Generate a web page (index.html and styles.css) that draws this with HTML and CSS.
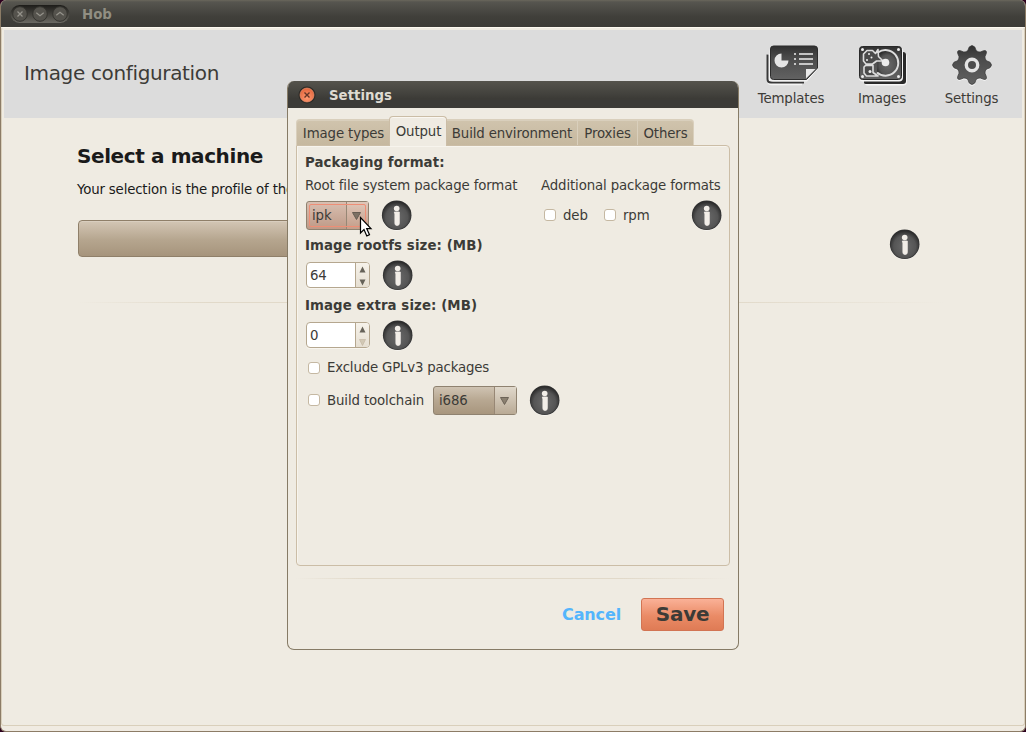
FILE: index.html
```html
<!DOCTYPE html>
<html lang="en">
<head>
<meta charset="utf-8">
<title>Hob</title>
<link rel="stylesheet" href="styles.css">
</head>
<body>
<svg class="defs" width="0" height="0">
  <defs>
    <linearGradient id="dark" x1="0" y1="0" x2="0" y2="1"><stop offset="0" stop-color="#303030"/><stop offset=".35" stop-color="#4b4b4b"/><stop offset="1" stop-color="#626262"/></linearGradient>
    <radialGradient id="disc" cx=".5" cy=".58" r=".55"><stop offset="0" stop-color="#6a6a6a"/><stop offset=".7" stop-color="#555"/><stop offset="1" stop-color="#2c2c2c"/></radialGradient>
    <symbol id="info" viewBox="0 0 32 32">
      <circle cx="15.700" cy="16.900" r="14.800" fill="#fbf9f5"/>
      <circle cx="15.700" cy="16.200" r="14.800" fill="#333"/>
      <circle cx="15.700" cy="16.200" r="14.200" fill="url(#disc)"/>
      <circle cx="15.700" cy="9.500" r="2.800" fill="#f2eee8"/>
      <path d="M13.300 13h5v11.500q0 2-2.200 2t-2.200-2V15z" fill="#f2eee8" stroke="#f2eee8" stroke-width=".8" stroke-linejoin="round"/>
    </symbol>
  </defs>
</svg>
<div class="window">
  <header class="titlebar">
    <svg class="controls" width="60" height="20" viewBox="0 0 60 20">
      <defs><linearGradient id="pill" x1="0" y1="0" x2="0" y2="1"><stop offset="0" stop-color="#1d1c19"/><stop offset="1" stop-color="#6b6962"/></linearGradient></defs>
      <rect x=".5" y="1" width="59" height="18" rx="9" fill="url(#pill)"/>
      <g fill="#55534d" stroke="#35342f"><circle cx="10" cy="10" r="7.3"/><circle cx="30" cy="10" r="7.3"/><circle cx="50" cy="10" r="7.3"/></g>
      <path d="M7.5 7.5l5 5m0-5l-5 5M26.3 8.7l3.7 3 3.7-3M46.3 11.3l3.7-3 3.7 3" fill="none" stroke="#95938b" stroke-width="1.2"/>
    </svg>
    <span class="wtitle">Hob</span>
  </header>
  <main class="content">
    <div class="toolbar">
      <h1 class="heading">Image configuration</h1>
      <nav class="tools">
        <div class="tool tool-templates">
          <svg width="54" height="42" viewBox="0 0 54 42">
            <path d="M3.500 9v26q0 3.500 3.500 3.500h30" fill="none" stroke="#f4f4f4" stroke-width="3.500"/>
            <path d="M2.500 9.500v24.500q0 3.500 3.500 3.500h33" fill="none" stroke="#383838" stroke-width="2"/>
            <path d="M4.500 6q0-4 4-4h41.500q3 0 3 3v19L42 36.500H8q-3.500 0-3.500-3z" fill="#f1f1f1"/>
            <path d="M5.500 4q0-3 3-3h41q3 0 3 3v19L41.500 34.500H8.500q-3 0-3-3z" fill="url(#dark)" stroke="#2d2d2d" stroke-width="1"/>
            <path d="M16.500 8.500v7h7a7 7 0 1 1-7-7z" fill="#e5e5e5"/>
            <path d="M29 9h2M34 9h14M29 14h2M34 14h14M29 19h2M34 19h14" stroke="#eee" stroke-width="1.700"/>
            <path d="M41 24h9.500L41 33.500z" fill="#e9e9e9"/>
          </svg><span class="tlabel">Templates</span>
        </div>
        <div class="tool tool-images">
          <svg width="50" height="42" viewBox="0 0 50 42">
            <path d="M7 37v1.500q0 2 2 2h36q4 0 4-4V12q0-3-3-4z" fill="#f5f5f5"/>
            <path d="M6 35.500v2q0 1.500 2 1.500h37q3 0 3-3V10q0-3-3-3z" fill="#292929"/>
            <rect x="1" y="2" width="44" height="34.500" rx="4" fill="#f5f5f5"/>
            <rect x="1.500" y="1.500" width="42" height="33" rx="3" fill="url(#dark)" stroke="#292929"/>
            <path d="M20 7.500A12.800 12.800 0 1 1 19 27.500" fill="url(#disc)" stroke="#ddd" stroke-width="2"/>
            <path d="M9 5.500h5.500l3 3 2.500-4 .5 7 4.500 4.500h-6.500l-4 3H8L5.500 16V9zM7.500 20.500h7.500v7l5 3.500H8.500L6 28V22z" fill="#4b4b4b" stroke="#ddd" stroke-width="1.600" stroke-linejoin="round"/>
            <circle cx="27.500" cy="17.500" r="3.800" fill="#ededed"/>
            <g fill="#eee"><circle cx="4.500" cy="4.500" r="1.500"/><circle cx="40.500" cy="4.500" r="1.500"/><circle cx="4.500" cy="31.500" r="1.500"/><circle cx="40.500" cy="31.500" r="1.500"/><circle cx="11" cy="9" r="1"/><circle cx="9" cy="15" r="1"/><circle cx="13.500" cy="12.500" r="1"/><circle cx="12" cy="26.500" r="1.500"/></g>
          </svg><span class="tlabel">Images</span>
        </div>
        <div class="tool tool-settings">
          <svg width="42" height="42" viewBox="-21 -20 42 42">
            <defs><path id="gear" d="M-2.800-18Q0-21 2.800-18L4.200-14.500Q6-12.800 8.200-13L11.500-14.300Q15.200-15.200 14.300-11.500L13-8.200Q12.800-6 14.500-4.200L18-2.800Q21 0 18 2.800L14.500 4.200Q12.800 6 13 8.200L14.300 11.500Q15.200 15.200 11.500 14.300L8.200 13Q6 12.800 4.200 14.500L2.800 18Q0 21-2.800 18L-4.200 14.500Q-6 12.800-8.200 13L-11.500 14.300Q-15.200 15.200-14.300 11.500L-13 8.200Q-12.800 6-14.500 4.200L-18 2.800Q-21 0-18-2.800L-14.500-4.200Q-12.800-6-13-8.200L-14.300-11.500Q-15.200-15.200-11.500-14.300L-8.200-13Q-6-12.800-4.200-14.500z"/></defs>
            <use href="#gear" y="1.300" fill="#f8f8f8"/><use href="#gear" fill="url(#dark)" stroke="#383838" stroke-width=".7"/>
            <circle r="5.700" fill="#4d4d4d" stroke="#e4e4e4" stroke-width="3.400"/>
          </svg><span class="tlabel">Settings</span>
        </div>
      </nav>
    </div>
    <section class="machine">
      <h2 class="mtitle">Select a machine</h2>
      <p class="mtext">Your selection is the profile of the</p>
      <div class="mrow"><div class="mselect"></div><svg class="info" width="32" height="32"><use href="#info"/></svg></div>
      <div class="separator"></div>
    </section>
  </main>
</div>

<div class="dialog">
  <header class="dtitlebar">
    <svg width="18" height="18" viewBox="0 0 18 18">
      <defs><radialGradient id="close" cx=".5" cy=".7" r=".6"><stop offset="0" stop-color="#ff9970"/><stop offset="1" stop-color="#e56b42"/></radialGradient></defs>
      <circle cx="9" cy="9" r="8.500" fill="#2b2925"/><circle cx="9" cy="9" r="7" fill="url(#close)" stroke="#f79a76" stroke-width=".6"/>
      <path d="M6.500 6.500l5 5m0-5l-5 5" stroke="#633527" stroke-width="1.400"/>
    </svg>
    <span class="dtitle">Settings</span>
  </header>
  <div class="dbody">
    <div class="tabs">
      <div class="tab tab-types">Image types</div><div class="tab tab-output active">Output</div><div class="tab tab-build">Build environment</div><div class="tab tab-proxies">Proxies</div><div class="tab tab-others">Others</div>
    </div>
    <div class="page">
      <div class="bold r-title">Packaging format:</div>
      <div class="row labels"><span class="lab-root">Root file system package format</span><span class="lab-add">Additional package formats</span></div>
      <div class="row control">
        <div class="combo hot"><span class="ctext">ipk</span><span class="carrow"><svg width="9" height="8"><path d="M.5.500h8L4.500 7.500z" fill="#7d7064" stroke="#665c52"/></svg></span></div>
        <svg class="info i1" width="32" height="32"><use href="#info"/></svg>
        <label class="check c-deb"><i class="box"></i><span>deb</span></label>
        <label class="check c-rpm"><i class="box"></i><span>rpm</span></label>
        <svg class="info i2" width="32" height="32"><use href="#info"/></svg>
      </div>
      <div class="bold row labels">Image rootfs size: (MB)</div>
      <div class="row control">
        <div class="spin"><span class="num">64</span><span class="steps"><svg width="7" height="7"><path d="M.5 6.500h6L3.500.500z" fill="#666259"/></svg><svg width="7" height="7"><path d="M.5.500h6L3.500 6.500z" fill="#666259"/></svg></span></div>
        <svg class="info i3" width="32" height="32"><use href="#info"/></svg>
      </div>
      <div class="bold row labels">Image extra size: (MB)</div>
      <div class="row control">
        <div class="spin"><span class="num">0</span><span class="steps"><svg width="7" height="7"><path d="M.5 6.500h6L3.500.500z" fill="#666259"/></svg><svg width="7" height="7"><path d="M.5.500h6L3.500 6.500z" fill="#d2c8b5" stroke="#c0b49e" stroke-width=".6"/></svg></span></div>
        <svg class="info i3" width="32" height="32"><use href="#info"/></svg>
      </div>
      <div class="row gpl"><label class="check"><i class="box"></i>Exclude GPLv3 packages</label></div>
      <div class="row chain"><label class="check c-chain"><i class="box"></i><span>Build toolchain</span></label>
        <div class="combo wide"><span class="ctext">i686</span><span class="carrow"><svg width="9" height="8"><path d="M.5.500h8L4.500 7.500z" fill="#8b8070" stroke="#6c6357"/></svg></span></div>
        <svg class="info i4" width="32" height="32"><use href="#info"/></svg>
      </div>
    </div>
    <div class="separator dsep"></div>
    <footer class="actions"><span class="cancel">Cancel</span><span class="save">Save</span></footer>
  </div>
</div>
<svg class="cursor" width="14" height="22" viewBox="0 0 14 22"><path d="M1.500 1.500v15.500l3.500-3.400 2.800 6.300 2.700-1.200-2.800-6.100H12z" fill="#fff" stroke="#000" stroke-width="1.200"/></svg>
</body>
</html>
```
FILE: styles.css
```css
* { box-sizing: border-box; }
body { margin: 0; width: 1026px; height: 732px; overflow: hidden; background: #2c001e; font: 13.33px/20px "DejaVu Sans", sans-serif; letter-spacing: -.13px; color: #3c3b37; white-space: nowrap; position: relative; }
.defs { position: absolute; }
svg { display: block; flex: none; }
.window { width: 1026px; height: 732px; border: 1px solid #8c7c66; border-top: 0; border-radius: 6px; background: #f0ebe2; overflow: hidden; display: flex; flex-direction: column; }
.titlebar { height: 27px; flex: none; display: flex; align-items: center; padding: 1px 0 0 9px; background: linear-gradient(#6a675c 0, #56554f 2px, #403f3a 17px, #3c3b37); }
.wtitle { margin-left: 12px; padding-top: 2px; font-weight: bold; letter-spacing: 0; color: #918e82; }
.content { flex: none; height: 699px; padding: 2px 2px 0; border: 1px solid #d9cfbb; border-top-color: #fcf8ef; border-radius: 3px; background: #efebe2; }
.toolbar { height: 88px; background: #dcdcdc; display: flex; justify-content: space-between; }
.heading { margin: 28px 0 0 20px; font-size: 20px; line-height: 30px; font-weight: normal; letter-spacing: -.35px; }
.tools { display: flex; margin-right: 23px; padding-top: 15px; }
.tool { display: flex; flex-direction: column; align-items: center; }
.tool svg { height: 42px; }
.tool-templates { width: 70px; margin-right: 30px; }
.tool-templates svg { margin-left: 2px; }
.tool-images { width: 52px; margin-right: 36px; }
.tool-images svg { margin-left: 1px; }
.tool-settings { width: 55px; }
.tool-settings svg { margin-left: 1px; }
.tlabel { display: block; margin-top: 2px; text-align: center; }
.machine { padding: 26px 78px 0 73px; color: #1a1a1a; }
.mtitle { font-size: 20px; line-height: 24px; margin: 0; letter-spacing: -.4px; }
.mtext { margin: 12px 0 0; letter-spacing: -.17px; }
.mrow { display: flex; align-items: center; justify-content: space-between; margin-top: 20px; height: 37px; padding: 0 23px 0 1px; }
.mselect { width: 600px; height: 37px; border: 1px solid #8f7f69; border-radius: 4px; background: linear-gradient(#d3c6b5, #b5a58e 55%, #a6947c); box-shadow: inset 0 1px #d9cebf; }
.mrow .info { margin-top: 11px; }
.separator { height: 2px; background: linear-gradient(90deg, transparent, #e1d9c9 15%, #e1d9c9 75%, transparent); border-bottom: 1px solid transparent; background-clip: padding-box; }
.machine .separator { margin: 45px 0 0; }

.dialog { position: absolute; left: 287px; top: 81px; width: 452px; height: 569px; border: 1px solid #867b66; border-top: 0; border-radius: 7px; background: #efebe2; overflow: hidden; }
.dtitlebar { height: 27px; display: flex; align-items: center; padding-left: 10px; padding-top: 1px; background: linear-gradient(#55534c, #44433e 45%, #3c3b37 65%); }
.dtitle { margin-left: 13px; padding-top: 2px; font-weight: bold; letter-spacing: 0; color: #dfdbd2; }
.dbody { padding: 8px 8px 0; }
.tabs { height: 29px; display: flex; align-items: flex-end; }
.tab { height: 26px; border: 1px solid #d9cfbc; border-bottom: 0; background: linear-gradient(#d0c4ad, #c6b89f); line-height: 27px; text-align: center; box-shadow: inset 0 1px #d9cfbc; }
.tab-types { width: 94px; border-radius: 4px 0 0 0; border-right: 0; }
.tab-build { width: 131px; border-left: 0; }
.tab-proxies { width: 60px; border-left: 0; }
.tab-others { width: 56px; border-left: 0; border-radius: 0 4px 0 0; }
.tabs .active { height: 30px; margin: 0 0 -1px -1px; width: 58px; padding-left: 1px; position: relative; background: #efebe2; border-color: #cbbda6; border-radius: 4px 4px 0 0; box-shadow: inset 0 1px #faf7f1; line-height: 29px; }
.page { height: 421px; border: 1px solid #cbbda6; border-radius: 0 4px 4px 4px; padding: 6px 8px 0; box-shadow: inset 1px 1px #f7f4ed; }
.bold { font-weight: bold; letter-spacing: .09px; }
.r-title { height: 20px; line-height: 22px; }
.row { display: flex; align-items: center; }
.labels { height: 26px; padding-top: 2px; }
.control { height: 34px; }
.lab-root { width: 236px; }
.combo { display: flex; flex: none; height: 29px; width: 63px; margin-left: 1px; border: 1px solid #8f8270; border-radius: 3px; background: linear-gradient(#cfc3b2, #b7a791 50%, #a8967e); align-items: center; position: relative; }
.ctext { flex: 1; padding: 1px 0 0 5px; }
.carrow { width: 22px; height: 27px; border-left: 1px solid #978775; display: flex; align-items: center; justify-content: center; background: linear-gradient(#e0d8cb, #b9aa95); padding: 1px 2px 0 0; }
.hot { background: linear-gradient(#d8bfb1, #bf9a87); }
.hot .carrow { background: linear-gradient(#dfc7b9, #c49e8a); }
.hot::after { content: ""; position: absolute; inset: 2px; border: 1px solid #ee8e76; border-radius: 2px; }
.wide { width: 84px; }
.i1 { margin-left: 12px; }
.check { display: flex; flex: none; align-items: center; }
.check span { padding-top: 2px; }
.box { display: block; width: 12px; height: 12px; margin-right: 7px; background: #fff; border: 1px solid #c5b8a2; border-radius: 3px; }
.gpl .check, .c-chain { padding-left: 3px; }
.gpl .check { letter-spacing: -.18px; }
.c-deb { margin-left: 131px; width: 60px; }
.c-rpm { width: 87px; }
.spin { width: 64px; height: 26px; margin-left: 1px; border: 1px solid #b5a78f; border-radius: 4px; background: #fff; display: flex; overflow: hidden; box-shadow: 0 1px #f8f5ef; }
.num { flex: 1; padding-left: 3px; line-height: 26px; }
.steps { width: 14px; border-left: 1px solid #b5a78f; background: linear-gradient(#f6f2ea, #e6dfd2); display: flex; flex-direction: column; align-items: center; justify-content: space-between; padding: 3px 0 1px; }
.i3 { margin-left: 12px; }
.gpl { height: 32px; }
.chain { height: 32px; }
.c-chain { width: 127px; }
.i4 { margin-left: 12px; }
.dsep { margin-top: 12px; }
.actions { display: flex; align-items: center; justify-content: flex-end; margin-top: 17px; height: 34px; padding-right: 6px; }
.cancel { color: #54b5fc; font-size: 16px; font-weight: bold; margin-right: 20px; padding-top: 2px; }
.save { width: 83px; height: 33px; border: 1px solid #d27453; border-radius: 3px; font-size: 20px; font-weight: bold; line-height: 30px; letter-spacing: -.3px; text-align: center; background: linear-gradient(#fab197, #ea8b66 55%, #df7b55); }
.cursor { position: absolute; left: 359px; top: 216px; }
```
